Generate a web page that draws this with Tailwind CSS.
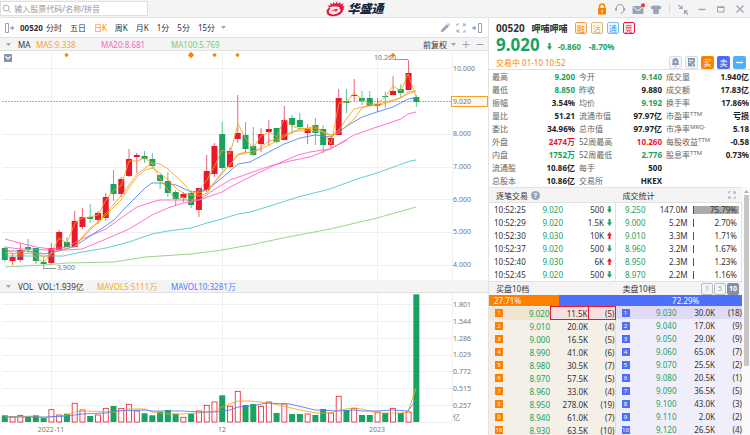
<!DOCTYPE html>
<html lang="zh-CN">
<head>
<meta charset="utf-8">
<meta name="viewport" content="width=device-width, initial-scale=1">
<title>华盛通 - 00520</title>
<script src="https://cdn.jsdelivr.net/npm/@tailwindcss/browser@4"></script>
</head>
<body class="flex h-screen flex-col overflow-hidden bg-white font-['Noto_Sans','Noto_Sans_CJK_SC',sans-serif] text-[8px] leading-[13px] text-[#333]">

<header class="grid h-[18px] shrink-0 grid-cols-[1fr_auto_1fr] items-center border-b border-[#e2e2e2] bg-[#f4f4f4]">
  <label class="flex h-[15px] w-[148px] items-center gap-[3px] border border-[#e0e0e0] bg-white pl-px">
    <svg class="size-[10px]" viewBox="0 0 10 10" fill="none" stroke="#9aa5b5"><circle cx="4.5" cy="4" r="3.2"/><path d="M6.8 6.4 9.3 9.2"/></svg>
    <input class="w-full min-w-0 text-[8px] text-[#333] outline-none placeholder:text-[#999]" type="text" aria-label="搜索股票" placeholder="输入股票代码/名称/拼音">
  </label>
  <div class="mr-10 flex items-center gap-[2px]">
    <svg class="h-4 w-[19px]" viewBox="0 0 19 16">
      <path d="M3.800 6.200C.6 7.800-.4 11 1.400 13.200c3 3.400 12.600 2.600 15.300-2.700 1.200-2.600-.2-4.500-2.600-5l-1.200 1.700c1.500.5 2 1.600 1.200 3-1.800 3-8.300 4.300-10.500 2.100-1.200-1.300-.7-3.300.9-4.700Z" fill="#e8183f"/>
      <path d="M5.500 10.800c.6-2 3.500-3.500 6.300-2.700-.2 2-2 3.300-4.300 3.200 1.300-.3 2-.9 2.300-1.600-1.500-.4-2.900 0-4.300 1.100Z" fill="#e8183f"/>
      <path d="M2.800 6.800 2.300 4.200l2.200.5-.2-2.700 2.600 1.500.3-2.800L9.300 3l1.300-2.600L12 3l2.300-2.300.3 2.900 2.900-1.300-1 2.800 2.200.3-1.300 1.900 1 1.200-2 .6C15.500 6.500 13 5.400 9.500 5.500 6.500 5.600 4.500 5.900 2.800 6.800Z" fill="#e8183f"/>
    </svg>
    <h1 class="text-[12px] leading-[16px] font-black italic text-[#16243a]">华盛通</h1>
  </div>
  <nav class="flex items-center justify-end gap-[7px] pr-1" aria-label="窗口">
    <div class="flex items-center gap-[6px]">
      <button class="size-3" aria-label="锁定"><svg viewBox="0 0 12 12" fill="none"><path d="M3.500 6V3.500a2.500 2.500 0 0 1 5 0V6" stroke="#ff8000" stroke-width="1.500"/><rect x="2" y="5" width="8" height="6.500" rx="1" fill="#ff8000"/><path d="M6 7v2.500" stroke="#fff"/></svg></button>
      <button class="size-3" aria-label="客服"><svg viewBox="0 0 12 12" fill="none" stroke="#98a5b8"><path d="M2.500 7V5a3.600 3.600 0 0 1 7.200 0v2.500Q9.500 10 6.500 10.300"/><path d="M2 5v3M10.300 5v3" stroke-width="1.600"/></svg></button>
      <button class="size-3" aria-label="消息"><svg class="overflow-visible" viewBox="0 0 12 12"><rect x=".5" y="3" width="11" height="8" rx=".8" fill="#98a5b8"/><path d="m1 4 5 3.700L11 4" fill="none" stroke="#f4f4f4"/><circle cx="11" cy="2.300" r="2" fill="#f02f3c"/></svg></button>
      <button class="size-3" aria-label="皮肤"><svg viewBox="0 0 12 12" fill="#98a5b8"><path d="M4 2.200q2 1.600 4 0l3.500 1.600-1 2.700-1.700-.4V11H3.200V6.100l-1.700.4-1-2.700Z"/></svg></button>
    </div>
    <span class="h-[10px] w-px bg-[#d8dce2]"></span>
    <button class="size-3" aria-label="精简"><svg viewBox="0 0 12 12" fill="none" stroke="#98a5b8" stroke-width="1.200"><path d="m1.500 2 3.300 3.300M5 2.500v3H2M11 11.500 7.700 8M7.500 11V7.800h3"/></svg></button>
    <button class="size-3" aria-label="最小化"><svg viewBox="0 0 12 12" stroke="#98a5b8" stroke-width="1.300"><path d="M2.500 6.500h7"/></svg></button>
    <button class="size-3" aria-label="最大化"><svg viewBox="0 0 12 12" fill="none" stroke="#98a5b8"><path d="M2.500 4.500h6.500v4.500h-6.500z"/><path d="M2 4h7.500" stroke-width="1.500"/></svg></button>
    <button class="size-3" aria-label="关闭"><svg viewBox="0 0 12 12" stroke="#98a5b8" stroke-width="1.200"><path d="m2.500 2.500 7 7M9.500 2.500l-7 7"/></svg></button>
  </nav>
</header>

<main class="flex min-h-0 flex-1">
  <section class="min-w-0 flex-1 border-r border-[#e2e2e2]" aria-label="图表">
    <div class="flex h-5 items-center border-b border-[#e2e2e2] pr-[5px] pl-1">
      <button class="mr-[5px] h-[10px] w-[11px]" aria-label="展开列表"><svg viewBox="0 0 11 10" fill="none" stroke="#98a5b8"><path d="M1.500.5h3v9h-3z"/><path d="M6 5h4M8.500 3v4" stroke-width="1.400"/></svg></button>
      <strong class="mr-[3px]">00520</strong>
      <div class="flex flex-1 items-center gap-2">
        <button>分时</button><button>五日</button><button class="text-[#ff8000]">日K</button><button>周K</button><button>月K</button><button>1分</button><button>5分</button>
        <button class="flex items-center gap-[6px]">15分<svg class="h-[3px] w-[5px]" viewBox="0 0 5 3" fill="#98a5b8"><path d="M0 0h5L2.500 3z"/></svg></button>
      </div>
      <div class="flex items-center gap-[6px]">
        <button class="size-[10px]" aria-label="画线"><svg viewBox="0 0 10 10" fill="#98a5b8"><path d="m.8 9.300.7-2.800L6.800 1.200l2.100 2.100L3.600 8.600ZM7.400.7l.6-.6 2 2-.6.600z"/></svg></button>
        <button class="size-[10px]" aria-label="全屏"><svg viewBox="0 0 10 10" fill="none" stroke="#98a5b8"><path d="M6.500 1H9v2.500M9 1 6.500 3.500M3.500 9H1V6.500M1 9l2.500-2.500M1 3V1h2M9 7v2H7"/></svg></button>
        <button class="h-[10px] w-[11px]" aria-label="展开详情"><svg viewBox="0 0 11 10" fill="none" stroke="#98a5b8"><path d="M6.500.5h3v9h-3z"/><path d="M0 5h4M2.500 3v4" stroke-width="1.400"/></svg></button>
      </div>
    </div>

    <div class="flex h-[13px] items-center border-b border-[#e2e2e2] bg-[#f4f4f4] pr-1 pl-[6px]">
      <svg class="mr-[7px] h-[3px] w-[5px]" viewBox="0 0 5 3" fill="#98a5b8"><path d="M0 0h5L2.500 3z"/></svg>
      <span class="w-[18px]">MA</span>
      <span class="w-[65px] text-[#f9a825]">MA5:9.338</span>
      <span class="w-[70px] text-[#ff5cc8]">MA20:8.681</span>
      <span class="flex-1 text-[#7ecb6c]">MA100:5.769</span>
      <div class="flex items-center gap-[6px]">
        <button class="flex items-center gap-1">前复权<svg class="h-[3px] w-[5px]" viewBox="0 0 5 3" fill="#98a5b8"><path d="M0 0h5L2.500 3z"/></svg></button>
        <button class="size-2" aria-label="放大"><svg viewBox="0 0 8 8" stroke="#98a5b8"><path d="M.5 4.500h7M4 1v7"/></svg></button>
        <button class="size-2" aria-label="缩小"><svg viewBox="0 0 8 8" stroke="#98a5b8"><path d="M.5 4.500h7"/></svg></button>
      </div>
    </div>

    <svg id="price" class="block h-auto w-full text-[7px]" viewBox="0 51 488 229" fill="none" role="img" aria-label="日K线"></svg>

    <div class="flex h-[13px] items-center border-b border-[#e2e2e2] bg-[#f4f4f4] pl-[6px]">
      <svg class="mr-[7px] h-[3px] w-[5px]" viewBox="0 0 5 3" fill="#98a5b8"><path d="M0 0h5L2.500 3z"/></svg>
      <span class="w-5">VOL</span>
      <span class="w-[59px]">VOL:1.939亿</span>
      <span class="w-[74px] text-[#f9a825]">MAVOL5:5111万</span>
      <span class="text-[#4b7dff]">MAVOL10:3281万</span>
    </div>

    <svg id="volume" class="block h-auto w-full text-[7px]" viewBox="0 293 488 142" fill="none" role="img" aria-label="成交量"></svg>
  </section>

  <aside class="w-[261px] shrink-0" aria-label="报价">
    <div class="h-[52px] border-b border-[#e2e2e2] pt-1 pr-1 pl-[7px]">
      <div class="flex h-3 items-center gap-1">
        <strong class="mr-[3px] text-[10px]">00520</strong>
        <strong class="mr-[3px] text-[9px]">呷哺呷哺</strong>
        <span class="flex size-3 items-center justify-center rounded-[2px] border border-[#ff9a3c] bg-[#fff7ee] text-[#ff8000]">融</span>
        <span class="flex size-3 items-center justify-center rounded-[2px] border border-[#dcb86a] bg-[#fffaf0] text-[#d0a548]">沽</span>
        <span class="flex size-3 items-center justify-center rounded-[2px] border border-[#7cc0fa] bg-[#f0f8ff] text-[#3f9ff5]">通</span>
        <span class="flex size-3 items-center justify-center rounded-[2px] border border-[#e8193c] bg-[#fff3f5] text-[#e8193c]">竞</span>
      </div>
      <div class="mt-px flex h-5 items-center text-[#1aa260]">
        <strong class="mr-[7px] text-[17px] leading-5">9.020</strong>
        <svg class="mt-[3px] mr-[6px] h-[7px] w-[5px]" viewBox="0 0 5 7" fill="#1aa260"><path d="M1.500 0h2v3.500H5L2.500 7 0 3.500h1.500z"/></svg>
        <strong class="mr-2 pt-[2px]">-0.860</strong><strong class="pt-[2px]">-8.70%</strong>
      </div>
      <div class="flex h-[14px] items-center gap-[3px]">
        <span class="flex-1 text-[#ff8000]">交易中 01-10 10:52</span>
        <button class="size-[13px] rounded-[2px] border border-[#d8dde5] bg-[#f5f7fa]" aria-label="提醒"><svg viewBox="0 0 11 11" fill="#8c99ab"><path d="M5.500 1C3.300 1 2.500 2.500 2.500 4v2.500L1.800 8h7.400l-.7-1.500V4c0-1.500-.8-3-3-3ZM4 8.700h3L5.500 10z"/><circle cx="5.500" cy="5" r="1" fill="#fff"/></svg></button>
        <button class="size-[13px] rounded-[2px] border border-[#d8dde5] bg-[#f5f7fa]" aria-label="笔记"><svg viewBox="0 0 11 11" fill="#8c99ab"><path d="M2 1h7v8.500H2z"/><path d="M3 3.500h4.500M3 5.500h2.500M9.500 5 5.500 9" stroke="#fff" stroke-width=".8"/></svg></button>
        <button class="size-[13px] rounded-[2px] bg-[#ff8000] text-white">买</button>
        <button class="size-[13px] rounded-[2px] bg-[#4a6cf7] text-white">卖</button>
        <button class="size-[13px] rounded-[2px] bg-[#4fb0fa]" aria-label="移除自选"><svg viewBox="0 0 13 13" stroke="#fff" stroke-width="1.300"><path d="M3 6.500h7"/></svg></button>
      </div>
    </div>

    <dl id="stats" class="grid grid-cols-3 gap-x-1 pr-px pl-[3px]"></dl>

    <div class="flex">
      <div class="min-w-0 flex-1">
        <div class="grid h-4 grid-cols-2 items-center border-y border-[#e2e2e2] bg-[#f4f4f4]">
          <h2 class="flex items-center gap-[3px] pl-[7px]">逐笔交易<button class="size-[9px] rounded-full bg-[#98a5b8] text-[7px] leading-[9px] font-bold text-white" aria-label="说明">?</button></h2>
          <div class="flex items-center justify-between pr-[6px] pl-[7px]"><h2>成交统计</h2>
            <button class="size-2" aria-label="展开统计"><svg viewBox="0 0 10 10" fill="none" stroke="#98a5b8" stroke-width="1.200"><path d="M6.500 1H9v2.500M9 1 6.500 3.500M3.500 9H1V6.500M1 9l2.500-2.500M1 3V1h2M9 7v2H7"/></svg></button></div>
        </div>
        <div class="grid grid-cols-2">
          <table class="w-full table-fixed border-r border-[#e2e2e2]" aria-label="逐笔交易"><colgroup><col class="w-[38px]"><col class="w-[36px]"><col><col class="w-[11px]"></colgroup><tbody id="ticks"></tbody></table>
          <table class="w-full table-fixed border-r border-[#e2e2e2]" aria-label="成交统计"><colgroup><col class="w-[30px]"><col><col class="w-[54px]"></colgroup><tbody id="dist"></tbody></table>
        </div>
        <div class="grid h-[14px] grid-cols-2 items-center border-t border-[#e2e2e2] bg-[#f4f4f4]">
          <h2 class="pl-[7px]">买盘10档</h2>
          <div class="flex items-center justify-between pr-[3px] pl-[7px]"><h2>卖盘10档</h2>
            <div class="flex gap-px text-[7px] leading-[10px] text-[#98a5b8]">
              <button class="size-3 rounded-[2px] border border-[#b4bdcb]">1</button>
              <button class="size-3 rounded-[2px] border border-[#b4bdcb]">5</button>
              <button class="size-3 rounded-[2px] border border-[#8291a7] bg-[#8291a7] font-bold text-white">10</button>
            </div></div>
        </div>
        <div class="flex h-[11px] bg-[#4d6ffa] leading-[11px] text-white">
          <span class="bg-[#ff8000] pl-[5px]" style="width:27.71%">27.71%</span>
          <span class="flex-1 pl-[113px]">72.29%</span>
        </div>
        <div class="grid grid-cols-2">
          <table class="w-full table-fixed border-r border-[#e2dcd2] bg-[#f4f0e7]" aria-label="买盘"><colgroup><col class="w-[20px]"><col class="w-[41px]"><col><col class="w-[27px]"></colgroup><tbody id="bids"></tbody></table>
          <table class="w-full table-fixed bg-[#f0eefa]" aria-label="卖盘"><colgroup><col class="w-[20px]"><col class="w-[41px]"><col><col class="w-[27px]"></colgroup><tbody id="asks"></tbody></table>
        </div>
      </div>
      <div class="w-2 shrink-0 bg-[#fafafa] pt-[3px] pr-px pl-[2px]">
        <svg class="mb-[2px] h-[3px] w-[5px]" viewBox="0 0 5 3" fill="#b0b0b0"><path d="M0 3h5L2.500 0z"/></svg>
        <div class="h-[171px] bg-[#c6c6c6]"></div>
      </div>
    </div>
  </aside>
</main>

<script>
const RED = '#e8192c', GREEN = '#1aa260', ORANGE = '#f7a21b', BLUE = '#4b7dff', GRID = '#efefef';
const line = (x1, y1, x2, y2, c, extra = '') => `<path d="M${x1} ${y1}L${x2} ${y2}" stroke="${c}" ${extra}/>`;
const poly = (s, c) => `<polyline points="${s}" stroke="${c}" stroke-width="1" stroke-opacity=".85"/>`;
const label = (x, y, t, a = 'start') => `<text x="${x}" y="${y}" fill="#777" text-anchor="${a}">${t}</text>`;
const cx = i => 4.8 + 7.765 * i;

// direction, high, body top, body bottom, low, volume top
const bars = [
['G',247,248,260,262,415.3],['R',253,257,261,265,417],['R',243,250,260,262,415.3],['G',239,247,249,253,416.7],['G',248,248,261,264,415.3],['G',257,262,264,268,417.7],
['R',243,248,263,264,409.7],['R',230,232,250,250,415],['G',237,242,247,247,413.7],['R',211,221,247,247,403.3],['R',208,217,227,229,410],['G',204,217,219,223,416],
['R',211,213,220,224,415],['R',193,197,218,221,408.3],['G',170,184,194,201,406],['R',177,179,194,197,408.3],['R',149,159,176,177,404.3],['R',153,155,157,173,411],
['G',151,156,159,163,413.3],['G',153,159,166,169,415.3],['G',174,175,181,189,411.7],['G',172,181,193,197,410],['G',190,192,199,206,413.7],['R',192,194,198,202,417.3],
['G',190,193,205,208,413.7],['R',188,188,210,217,411],['R',155,171,190,192,405.3],['R',143,146,174,177,402],['G',122,134,168,170,395.3],['R',147,151,167,168,406.3],
['R',95,133,139,143,391.3],['G',122,135,149,152,405],['G',127,146,155,156,404],['R',128,134,144,152,406.3],['R',120,129,132,146,402],['G',128,128,142,143,413],
['R',106,120,140,140,404],['G',115,118,125,134,414],['G',113,120,127,130,414],['R',124,129,133,144,414],['G',118,125,133,145,415],['G',125,129,145,153,409],
['R',137,138,145,148,413],['R',89,98,135,135,396.3],['G',89,101,103,113,410],['R',79,95,96,101,408.3],['G',91,98,101,105,415],['G',91,98,106,107,415],
['R',98,104,106,112,412],['G',92,96,97,108,413],['R',76,91,95,95,408.3],['G',84,89,93,98,413],['R',60,73,90,90,412],['G',95,97,102,107,294.3]];

const grid = (ys, top, bottom) => ys.map(y => line(2, y, 452, y, GRID)).join('') +
  [51.5, 222.5, 377.5, 452.5].map(x => line(x, top, x, bottom, GRID)).join('');

let p = grid([68.5, 134.5, 167.5, 199.5, 232.5, 265.5], 51, 280);
p += line(2, 101.5, 452, 101.5, ORANGE, 'stroke-dasharray="2 1"');
bars.forEach(([d, h, t, b, l], i) => {
  const c = d === 'R' ? RED : GREEN, x = cx(i);
  p += line(x, h, x, l, c, 'stroke-width=".9" stroke-opacity=".75"') + `<rect x="${x - 3}" y="${t}" width="6" height="${b - t}" fill="${c}"/>`;
});
p += poly('5,267 44,265 67,263 114,262 145,257 191,254 222,250 250,245 283,238 330,229 377,218 416,207', '#86cf77');
p += poly('5,256 63,256 82,252 106,248 129,242 152,234 168,231 191,228 207,223 222,219 238,214 250,212 270,206 298,197 330,189 357,179 377,173 410,161 416,160', '#4cc4c4');
p += poly('5,239 20,243 36,247 51,249 67,247 82,239 106,229 121,218 137,207 152,202 160,200 199,200 215,189 230,180 250,173 270,166 290,161 310,157 330,149 347,140', '#ff5cc8');
p += poly('5,247 20,249 51,250 67,250 82,249 106,239 129,229 152,215 168,208 183,203 199,200 222,192 230,187 250,177 277,164 298,155 310,152 330,149 339,144 354,135 377,127 401,119 408,114 416,112', '#ff5cc8');
p += poly('5,251 28,251 44,254 59,251 75,246 98,231 114,220 129,204 145,188 152,183 160,183 176,185 191,192 207,190 222,178 238,164 250,162 267,153 284,144 300,138 315,135 331,137 347,126 362,117 377,112 393,107 408,99 416,98', BLUE);
p += poly('5,248 13,254 20,252 28,249 36,258 44,262 51,253 59,238 67,243 75,223 82,218 90,217 98,215 106,200 114,190 121,186 129,161 137,161 145,158 152,163 160,179 168,190 176,200 183,197 191,203 199,190 207,180 215,165 222,150 230,154 238,124 246,139 253,148 261,136 269,132 277,137 284,119 292,126 300,129 308,128 315,126 323,132 331,144 339,103 347,102 354,93 362,99 370,104 377,104 385,97 393,86 401,91 408,74 416,97', ORANGE);
p += poly('5,253 20,254 36,253 44,257 59,250 75,247 82,237 90,228 98,223 106,215 114,207 121,200 129,188 137,177 145,170 152,168 160,173 168,180 176,188 183,193 191,195 199,196 207,193 215,182 222,172 230,165 238,154 246,152 253,154 261,147 269,141 277,139 284,135 300,129 315,128 331,135 339,130 347,118 354,109 362,107 377,105 385,102 401,98 408,92 416,91', ORANGE);
p += poly('75,246 90,230 106,213 121,196 137,174 152,163 160,164 168,169 183,183 191,192 199,193 207,190 222,174 238,155 246,153 261,149 277,141 292,132 308,130 323,132 331,136 339,133 354,119 362,108 370,105 377,106 393,101 408,94 416,91', ORANGE);
const spark = (x, r) => `<path d="M${x} ${55 - r}L${x + r} 55L${x} ${55 + r}L${x - r} 55Z" fill="#ff8000"/>`;
p += spark(66.5, 2.2) + spark(191, 3.2) + spark(214.5, 2.2) + spark(237.5, 2.2) + spark(393, 2.2);
p += line(395, 59.5, 408, 59.5, '#999') + label(374, 60, '10.260') + line(43, 268.5, 56, 268.5, '#999') + label(57, 270, '3.900');
p += '<rect x="4" y="54" width="8" height="8" fill="#8797ae"/><path d="M5.500 56.500 8 59l2.500-2.500" stroke="#fff" stroke-width="1.200"/>';
[['10.000', 70.5], ['8.000', 136], ['7.000', 168.5], ['6.000', 201.5], ['5.000', 234], ['4.000', 267]].forEach(([t, y]) => p += label(453, y, t));
p += '<rect x="451.500" y="96.500" width="36" height="10" fill="#fff6ee" stroke="#f7a21b"/>' + label(453, 104, '9.020');
document.getElementById('price').innerHTML = p;

let v = grid([304.5, 321.5, 338.5, 355.5, 371.5, 388.5, 405.5, 422.5], 293, 422);
bars.forEach(([d, , , , , y], i) => {
  const x = cx(i);
  v += d === 'R' ? `<rect x="${x - 2.5}" y="${y}" width="5" height="${422 - y}" fill="#fff" stroke="${RED}" stroke-width=".8"/>`
                 : `<rect x="${x - 3}" y="${y}" width="6" height="${422 - y}" fill="${GREEN}"/>`;
});
v += poly('5,417 36,416 44,418 67,415 75,412 82,411 114,412 129,409 145,409 152,412 168,414 183,414 199,413 215,411 222,407 230,404 238,401 250,401 270,403 283,406 300,410 317,413 331,413 339,410 354,408 362,409 377,413 401,413 408,412 416,388', ORANGE);
v += poly('5,417 44,417 67,416 82,414 106,413 114,411 145,410 152,411 183,411 199,412 215,412 230,410 238,407 250,406 267,403 290,404 315,410 339,411 354,410 362,411 377,411 393,410 408,411 416,400', BLUE);
['1.801', '1.544', '1.286', '1.029', '0.772', '0.515', '0.257'].forEach((t, i) => v += label(453, Math.round(307 + i * 16.8), t));
v += label(453, 420, '亿') + label(51, 432, '2022-11', 'middle') + label(222, 432, '12', 'middle') + label(377, 432, '2023', 'middle');
document.getElementById('volume').innerHTML = v;

const tone = { g: 'text-[#1aa260]', r: 'text-[#e8192c]', k: 'text-[#222]' };
const stats = [
['最高','9.200','g'],['今开','9.140','g'],['成交量','1.940亿','k'],
['最低','8.850','g'],['昨收','9.880','k'],['成交额','17.83亿','k'],
['振幅','3.54%','k'],['均价','9.192','g'],['换手率','17.86%','k'],
['量比','51.21','k'],['流通市值','97.97亿','k'],['市盈率','亏损','k','TTM'],
['委比','34.96%','k'],['总市值','97.97亿','k'],['市净率','5.18','k','MRQ-'],
['外盘','2474万','r'],['52周最高','10.260','r'],['每股收益','-0.58','k','TTM'],
['内盘','1752万','g'],['52周最低','2.776','g'],['股息率','0.73%','k','TTM'],
['流通股','10.86亿','k'],['每手','500','k'],null,
['总股本','10.86亿','k'],['交易所','HKEX','k'],null];
document.getElementById('stats').innerHTML = stats.map(s => s ? `<div class="flex h-[13px] justify-between"><dt class="flex text-[#666]">${s[0]}${s[3] ? `<span class="text-[6px] leading-[11px]">${s[3]}</span>` : ''}</dt><dd class="font-bold ${tone[s[2]]}">${s[1]}</dd></div>` : '<div></div>').join('');

const arrow = up => up
  ? '<svg class="ml-[3px] h-[7px] w-[5px]" viewBox="0 0 5 7" fill="#e8192c"><path d="M1.500 7h2V3.500H5L2.500 0 0 3.500h1.500z"/></svg>'
  : '<svg class="ml-[3px] h-[7px] w-[5px]" viewBox="0 0 5 7" fill="#1aa260"><path d="M1.500 0h2v3.500H5L2.500 7 0 3.500h1.500z"/></svg>';
document.getElementById('ticks').innerHTML = [['10:52:25','9.020','500'],['10:52:29','9.020','1.5K'],['10:52:30','9.030','10K',1],['10:52:37','9.020','500'],['10:52:40','9.030','6K',1],['10:52:45','9.020','500']]
  .map(([t, q, n, up]) => `<tr class="h-[13px]"><td class="pl-[5px]">${t}</td><td class="text-right text-[#1aa260]">${q}</td><td class="text-right">${n}</td><td>${arrow(up)}</td></tr>`).join('');
document.getElementById('dist').innerHTML = [['9.250','147.0M','75.79'],['9.000','5.2M','2.70'],['9.010','3.3M','1.71'],['8.960','3.2M','1.67'],['8.950','2.3M','1.23'],['8.970','2.2M','1.16']]
  .map(([q, n, r], i) => `<tr class="h-[13px]"><td class="text-right text-[#1aa260]">${q}</td><td class="text-right">${n}</td><td class="pr-[2px] pl-[5px]"><div class="h-2 border-l border-[#555] text-right leading-[8px]"><div class="h-2 pr-[2px] ${i ? '' : 'bg-[#ababab]'}">${r}%</div></div></td></tr>`).join('');

const book = (rows, bid) => rows.map(([q, n, c], i) => {
  const hot = bid && !i ? 'border border-[#e8192c] bg-[#fadfe2]' : '';
  const row = i ? '' : bid ? 'bg-[#f0e5d0]' : 'bg-[#e0daf6]';
  return `<tr class="h-[13px] ${row}"><td class="p-0"><span class="ml-[6px] block size-2 text-center text-[6px] leading-[8px] text-white ${bid ? 'bg-[#ff8000]' : 'bg-[#4d6ffa]'}">${i + 1}</span></td><td class="p-0 text-right leading-[11px] text-[#1aa260]">${q}</td><td class="p-0 text-right leading-[11px] ${hot}">${n}</td><td class="p-0 text-right leading-[11px] ${hot}">(${c})</td></tr>`;
}).join('');
document.getElementById('bids').innerHTML = book([['9.020','11.5K',5],['9.010','20.0K',4],['9.000','16.5K',5],['8.990','41.0K',6],['8.980','30.5K',7],['8.970','57.5K',5],['8.960','33.0K',4],['8.950','278.0K',19],['8.940','61.0K',7],['8.930','63.5K',10]], true);
document.getElementById('asks').innerHTML = book([['9.030','30.0K',18],['9.040','17.0K',9],['9.050','29.0K',9],['9.060','65.0K',7],['9.070','25.5K',2],['9.080','20.5K',1],['9.090','36.5K',5],['9.100','43.0K',3],['9.110','2.0K',2],['9.120','26.5K',4]], false);
</script>
</body>
</html>
